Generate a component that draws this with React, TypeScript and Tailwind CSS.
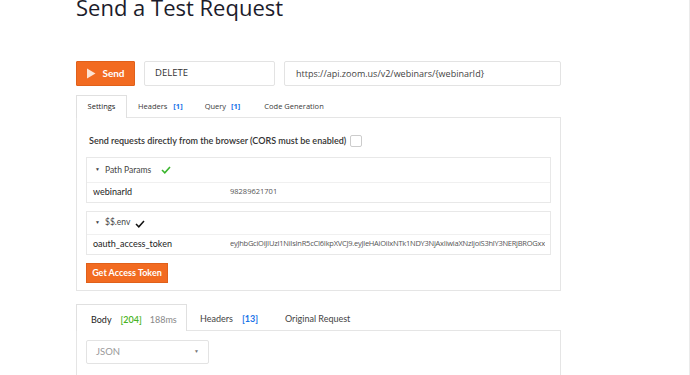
export default function App() {
  return (
    <div className="w-[690px] h-[375px] overflow-hidden bg-white border-r border-[#ebebeb] font-['Open_Sans',sans-serif] text-[#333]">
      <div className="ml-[76px] w-[485px]">
        <h1 className="mt-[-8px] text-[22px] leading-[30px] text-[#1c1c2b]">Send a Test Request</h1>

        {/* request line */}
        <div className="mt-[39px] flex h-[25px] gap-[9px]">
          <button className="flex w-[59px] items-center justify-center gap-[6px] rounded-[1px] bg-[#f26b21] border border-[#e0601a] text-white text-[10px] font-bold font-['Lato',sans-serif]">
            <svg width="10" height="11" viewBox="0 0 10 11">
              <path d="M1 0.5 L9.5 5.5 L1 10.5 Z" fill="#fde3d3" />
            </svg>
            Send
          </button>
          <div className="flex w-[131px] items-center rounded-[2px] border border-[#e3e3e3] pl-[10px] text-[9.5px] text-[#333]">DELETE</div>
          <div className="flex flex-1 items-center rounded-[2px] border border-[#e3e3e3] pl-[11px] text-[9px] text-[#444]">
            https://api.zoom.us/v2/webinars/{"{webinarId}"}
          </div>
        </div>

        {/* tabs */}
        <div className="mt-[9px] flex h-[23px] items-end text-[7.5px] text-[#3a3a3a]">
          <div className="relative z-10 flex h-[23px] w-[51px] items-center justify-center border border-b-0 border-[#e0e0e0] bg-white text-[#222]">Settings</div>
          <div className="flex h-[23px] items-center pl-[11px]">
            Headers <span className="ml-[6px] font-bold text-[#1a73e8]">[1]</span>
          </div>
          <div className="flex h-[23px] items-center pl-[22px]">
            Query <span className="ml-[5px] font-bold text-[#1a73e8]">[1]</span>
          </div>
          <div className="flex h-[23px] items-center pl-[24px]">Code Generation</div>
        </div>

        {/* settings panel */}
        <div className="-mt-px h-[174px] border border-[#e5e5e5] px-[9px] font-['Lato',sans-serif]">
          <div className="mt-[16px] flex items-center pl-[3px] text-[9px] font-semibold text-[#333]">
            Send requests directly from the browser (CORS must be enabled)
            <span className="ml-[4px] inline-block h-[12px] w-[12px] rounded-[2px] border border-[#ccc]" />
          </div>

          <div className="mt-[9px] border border-[#e8e8e8]">
            <div className="flex h-[25px] items-center border-b border-[#f0f0f0] pl-[8px] pt-[1px] text-[8.5px] text-[#444]">
              <span className="mr-[5px] text-[5px]">▼</span>
              Path Params
              <svg className="ml-[10px]" width="10" height="8" viewBox="0 0 10 8">
                <path d="M1 4 L3.8 6.8 L9 1" fill="none" stroke="#3ab52d" strokeWidth="1.6" />
              </svg>
            </div>
            <div className="flex h-[19px] items-center pl-[6px] text-[9px]">
              <span className="w-[137px] text-[#222]">webinarId</span>
              <span className="font-['Open_Sans',sans-serif] text-[7.5px] text-[#555]">98289621701</span>
            </div>
          </div>

          <div className="mt-[8px] border border-[#e8e8e8]">
            <div className="flex h-[23px] items-center border-b border-[#f0f0f0] pl-[8px] text-[8.5px] text-[#444]">
              <span className="mr-[5px] text-[5px]">▼</span>
              $$.env
              <svg className="ml-[5px] mt-[3px]" width="10" height="8" viewBox="0 0 10 8">
                <path d="M1 4 L3.8 6.8 L9 1" fill="none" stroke="#111" strokeWidth="1.5" />
              </svg>
            </div>
            <div className="flex h-[19px] items-center pl-[6px] pr-[5px] text-[9px]">
              <span className="w-[137px] shrink-0 text-[#222]">oauth_access_token</span>
              <span className="overflow-hidden whitespace-nowrap font-['Open_Sans',sans-serif] text-[7.5px] tracking-[-0.25px] text-[#555]">
                eyJhbGciOiJIUzI1NiIsInR5cCI6IkpXVCJ9.eyJleHAiOiIxNTk1NDY3NjAxIiwiaXNzIjoiS3hlY3NERjBROGxxxx
              </span>
            </div>
          </div>

          <button className="mt-[8px] h-[20px] w-[82px] border border-[#e0601a] bg-[#f26b21] text-[9px] font-bold text-white">Get Access Token</button>
        </div>

        {/* response tabs */}
        <div className="mt-[13px] flex h-[27px] items-end font-['Lato',sans-serif] text-[9px] text-[#444]">
          <div className="relative z-10 flex h-[27px] w-[111px] items-center border border-b-0 border-[#e0e0e0] bg-white pl-[14px] pt-[3px]">
            <span className="text-[#222]">Body</span>
            <span className="ml-[9px] font-semibold text-[#46b321]">[204]</span>
            <span className="ml-[8px] text-[#888]">188ms</span>
          </div>
          <div className="flex h-[27px] items-center pl-[13px] pt-[3px]">
            Headers <span className="ml-[9px] font-bold text-[#1a73e8]">[13]</span>
          </div>
          <div className="flex h-[27px] items-center pl-[27px] pt-[3px]">Original Request</div>
        </div>
        <div className="-mt-px h-[60px] border border-[#e5e5e5] px-[9px] pt-[9px]">
          <div className="flex h-[24px] w-[123px] items-center justify-between rounded-[2px] border border-[#e3e3e3] pl-[9px] pr-[9px] font-['Lato',sans-serif] text-[9.5px] text-[#999]">
            JSON
            <span className="text-[5px] text-[#777]">▼</span>
          </div>
        </div>
      </div>
    </div>
  );
}
